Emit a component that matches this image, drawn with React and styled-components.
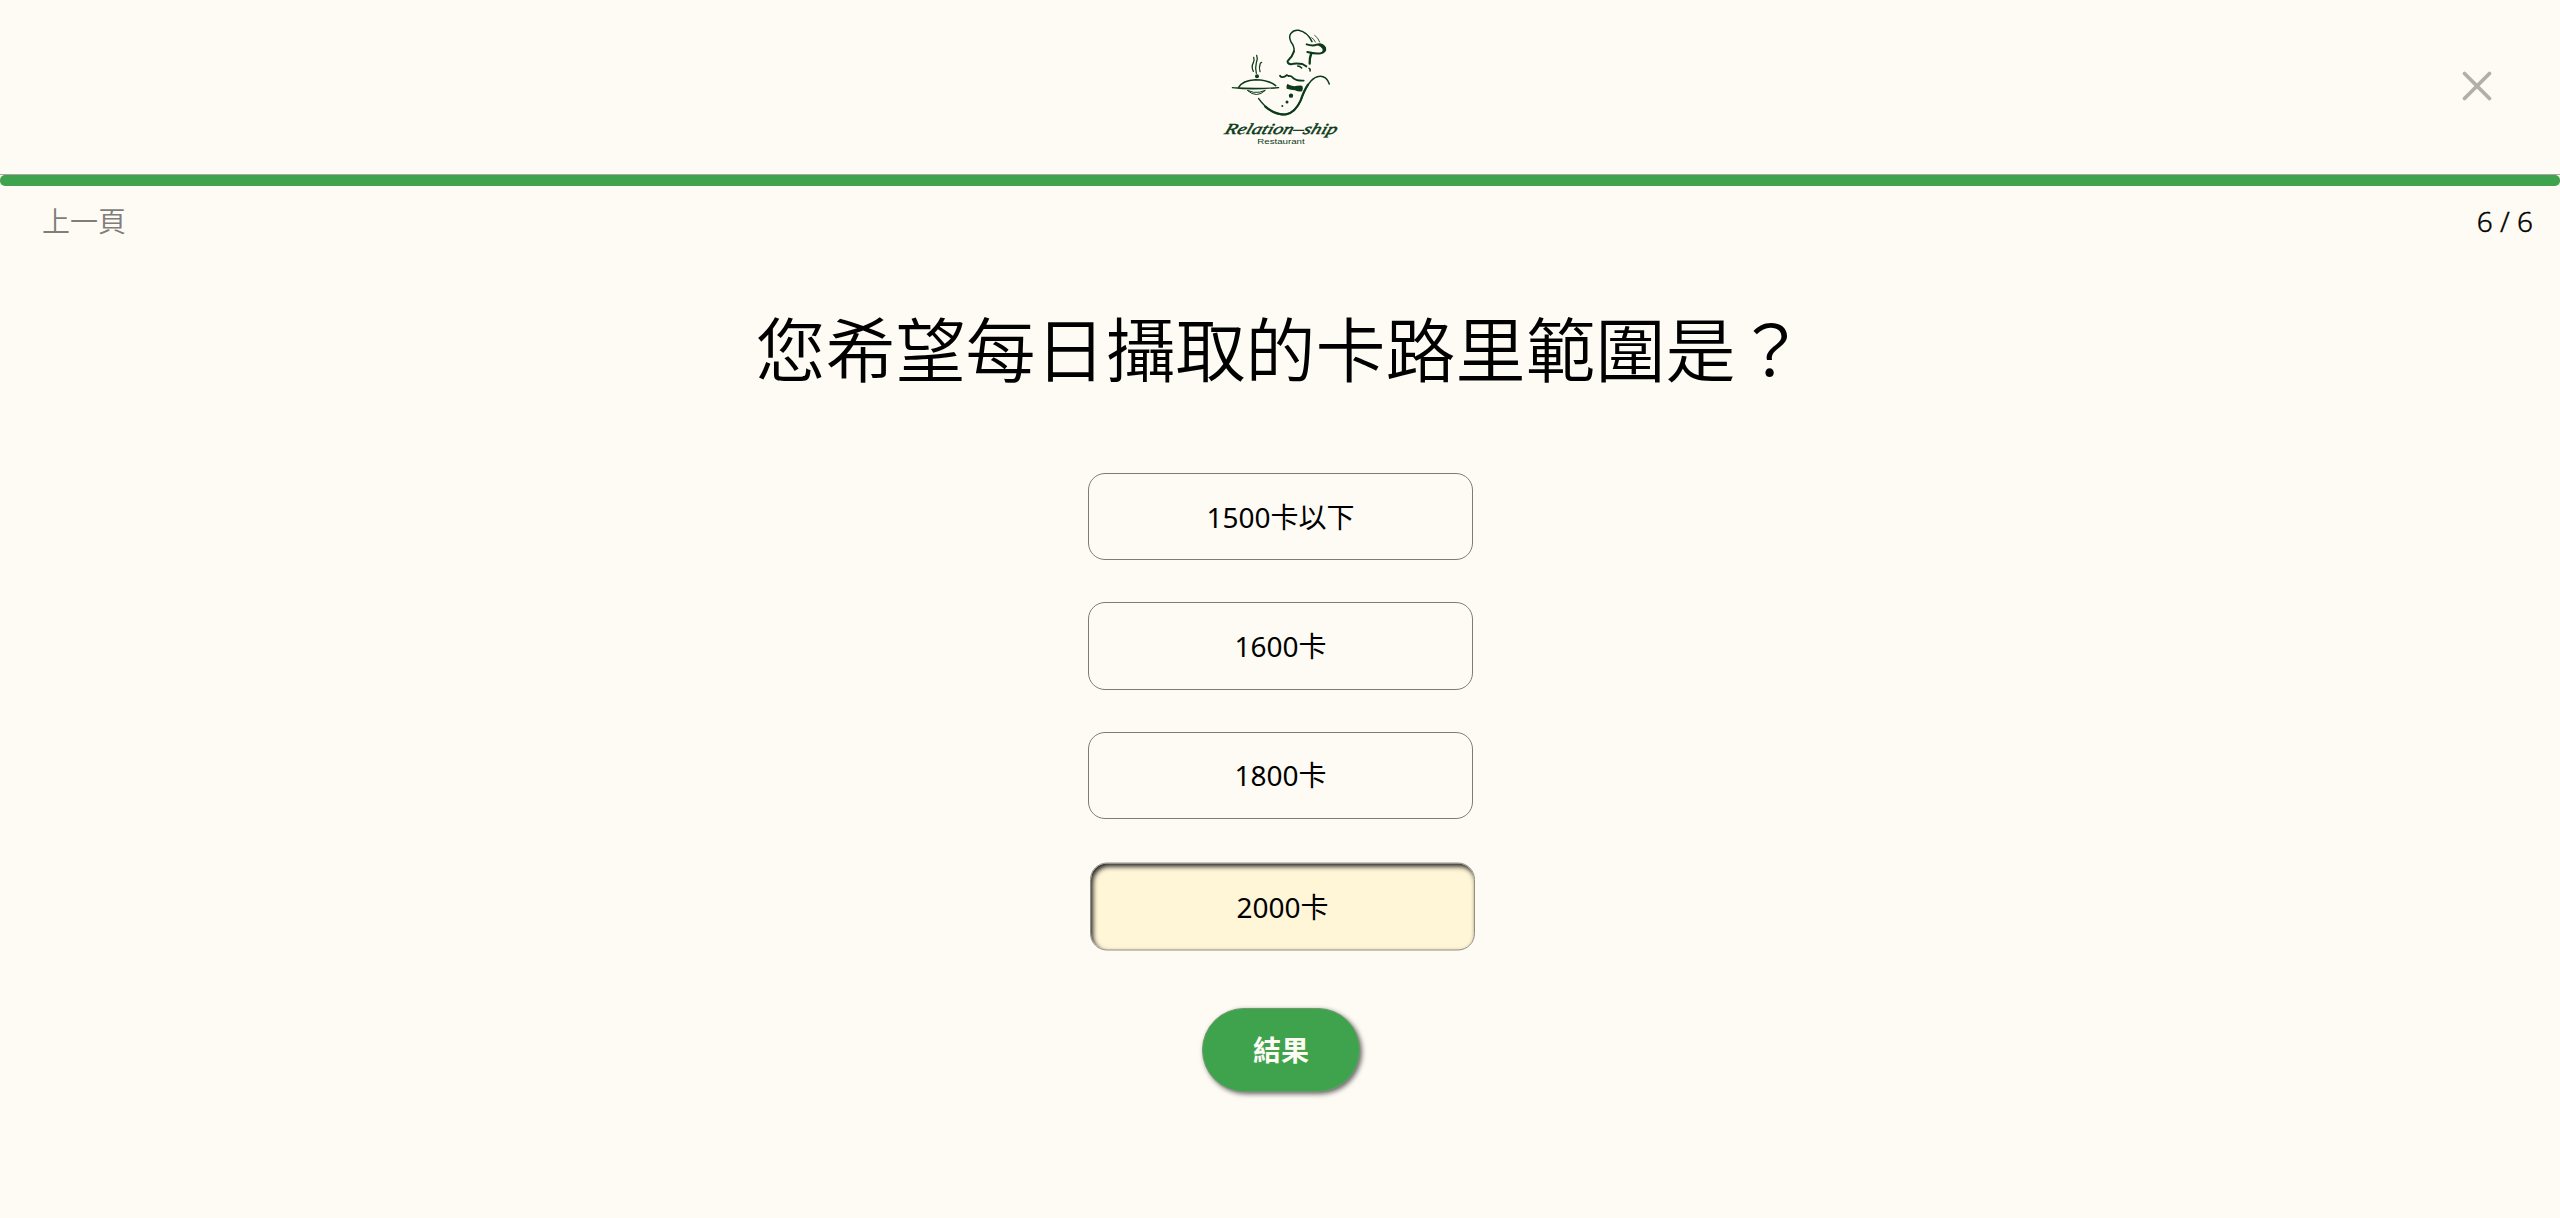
import React, { useState } from "react";
import styled, { createGlobalStyle, css } from "styled-components";

const GlobalStyle = createGlobalStyle`
  *, *::before, *::after { box-sizing: border-box; }
  body {
    margin: 0;
    background: #fefbf4;
    color: #000;
    font-family: "Noto Sans", "Noto Sans CJK TC", sans-serif;
  }
  button { font: inherit; color: inherit; cursor: pointer; }
`;

const Page = styled.div`
  display: flex;
  flex-direction: column;
  min-height: 100vh;
  background: #fefbf4;
`;

const Header = styled.header`
  display: grid;
  grid-template-columns: 1fr 140px 1fr;
  align-items: center;
  height: 175px;
  padding: 0 62px 0 62px;
  border-bottom: 1px solid #a9a7a3;
`;

const LogoArt = styled.svg`
  grid-column: 2;
  width: 140px;
  height: 130px;
  margin-bottom: 4px;
`;

const ScriptText = styled.text`
  font: italic 400 46px "Liberation Serif", serif;
  fill: #0c3a1a;
  stroke: #0c3a1a;
  stroke-width: 1.4;
`;

const SmallText = styled.text`
  font: 500 22px "Liberation Sans", sans-serif;
  fill: #0c3a1a;
`;

const CloseButton = styled.button`
  grid-column: 3;
  justify-self: end;
  display: flex;
  margin-bottom: 2px;
  padding: 0;
  border: 0;
  background: none;
`;

const CloseIcon = styled.svg`
  width: 42px;
  height: 42px;
  fill: none;
  stroke: #b1afaa;
  stroke-width: 3.8;
  stroke-linecap: round;
`;

const Progress = styled.div`
  height: 11px;
`;

const ProgressFill = styled.div`
  height: 100%;
  border-radius: 5px;
  background: #3fa34d;
`;

const StepRow = styled.div`
  display: flex;
  justify-content: space-between;
  align-items: center;
  height: 70px;
  padding: 0 27px 0 42px;
  font-size: 28px;
  font-weight: 300;
`;

const BackButton = styled.button`
  margin-bottom: 2px;
  padding: 0;
  border: 0;
  background: none;
  color: #807e7a;
  font-family: "Noto Sans CJK TC DemiLight", "Noto Sans CJK TC", sans-serif;
  font-weight: 350;
  line-height: 38px;
`;

const StepCount = styled.span`
  -webkit-text-stroke: 0.4px #000;
`;

const Question = styled.main`
  display: flex;
  flex-direction: column;
  align-items: center;
`;

const Title = styled.h1`
  margin: 42px 0 0 1px;
  height: 104px;
  font-size: 70px;
  line-height: 104px;
  font-weight: 350;
`;

const Options = styled.div`
  display: flex;
  flex-direction: column;
  gap: 42px;
  margin-top: 71px;
`;

const Option = styled.button`
  width: 385px;
  height: 87.4px;
  padding: 0 0 0 1px;
  border: 1px solid #7c7b78;
  border-radius: 17px;
  background: transparent;
  font-size: 28px;
  line-height: 38px;
  ${(p) =>
    p.$selected &&
    css`
      background: #fff5d7;
      border-color: #8f8d84;
      box-shadow: inset 2px 3px 5px #222;
      transform: translate(2px, 1.5px);
    `}
`;

const Submit = styled.button`
  width: 158px;
  height: 84px;
  margin: 59px 0 0 2px;
  padding: 0;
  border: 1px solid #6d9a6d;
  border-radius: 42px;
  background: #3fa34d;
  color: #fefbf4;
  font-size: 28px;
  line-height: 36px;
  font-weight: 700;
  box-shadow: 2px 2px 5px #666;
`;

const Logo = () => (
  <LogoArt viewBox="0 0 420 390" role="img" aria-label="Relation-ship Restaurant">
    <g fill="none" stroke="#0c3a1a" strokeWidth="4.5" strokeLinecap="round" strokeLinejoin="round">
      <path d="M252 94 Q254 80 243 66 Q235 50 243 40 Q251 29 266 31 Q292 36 306 65" />
      <path d="M252 94 Q246 112 233 123 Q231 130 242 133 Q256 128 277 132 L289 139" strokeWidth="6" />
      <path d="M314 46 Q325 53 329 66 M305 53 Q313 58 316 66" strokeWidth="2.5" />
      <path d="M290 73 Q308 79 320 74 Q337 70 345 83 Q349 96 332 100 Q314 102 292 96" strokeWidth="6" />
      <path d="M304 99 Q298 116 299 131" strokeWidth="7" />
      <path d="M297 145 Q302 147 300 153 M263 138 Q270 138 275 144" strokeWidth="4.5" />
      <path d="M210 167 Q216 177 231 165 M235 168 Q244 166 250 175 Q260 183 281 182" strokeWidth="5.5" />
      <path d="M146 236 Q178 280 216 284 Q253 285 275 235 Q296 177 322 170 Q348 164 358 192" strokeWidth="4.5" />
      <path d="M166 260 Q196 286 228 283 Q256 278 272 241 Q282 211 294 194" strokeWidth="6.5" />
      <path d="M86 202 Q97 181 137 179 Q177 180 197 197" />
      <path d="M67 203 Q125 211 206 203 Q137 207 67 203" strokeWidth="3.5" />
      <path d="M113 212 Q140 236 166 211 Q150 219 132 217 Z" strokeWidth="3" />
      <path d="M130 154 Q123 141 130 128 Q134 119 131 112 M139 160 Q135 144 139 128 Q144 116 140 106 M150 155 Q146 143 151 130 L155 127" strokeWidth="3.8" />
    </g>
    <g fill="#0c3a1a">
      <path d="M321 74 Q340 70 347 86 Q347 99 329 101 Q341 94 337 86 Q333 80 321 74Z" />
      <path d="M232 192 Q243 197 253 199 Q264 196 276 197 Q281 203 276 214 Q266 216 255 211 Q244 210 230 206 Q228 197 232 192Z" />
      <circle cx="141" cy="169" r="6" />
      <circle cx="243" cy="227" r="6.5" />
      <circle cx="231" cy="246" r="4.5" />
      <circle cx="217" cy="258" r="3" />
    </g>
    <ScriptText
      x="40"
      y="341"
      textLength="336"
      lengthAdjust="spacingAndGlyphs"
      transform="translate(119 0) skewX(-19)"
    >
      Relation–ship
    </ScriptText>
    <SmallText x="142" y="371" textLength="142" lengthAdjust="spacingAndGlyphs">
      Restaurant
    </SmallText>
  </LogoArt>
);

const choices = ["1500卡以下", "1600卡", "1800卡", "2000卡"];

export default function App() {
  const [selected, setSelected] = useState(3);
  return (
    <Page>
      <GlobalStyle />
      <Header>
        <Logo />
        <CloseButton aria-label="關閉">
          <CloseIcon viewBox="0 0 42 42">
            <path d="M8.5 8.5 33.5 33.5 M33.5 8.5 8.5 33.5" />
          </CloseIcon>
        </CloseButton>
      </Header>
      <Progress>
        <ProgressFill />
      </Progress>
      <StepRow>
        <BackButton>上一頁</BackButton>
        <StepCount>6 / 6</StepCount>
      </StepRow>
      <Question>
        <Title>您希望每日攝取的卡路里範圍是？</Title>
        <Options>
          {choices.map((label, i) => (
            <Option key={label} $selected={i === selected} onClick={() => setSelected(i)}>
              {label}
            </Option>
          ))}
        </Options>
        <Submit>結果</Submit>
      </Question>
    </Page>
  );
}
